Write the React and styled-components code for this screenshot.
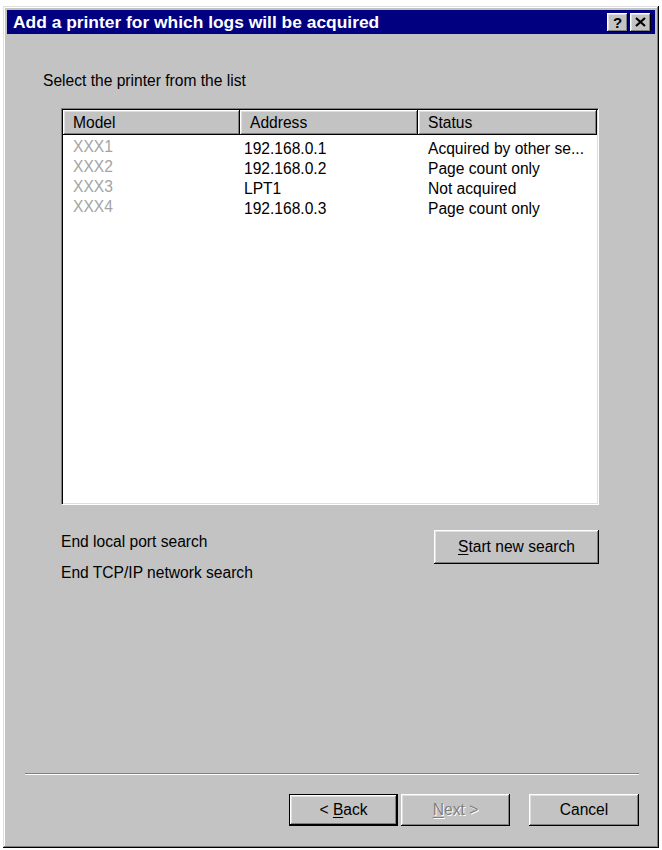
import styled, { createGlobalStyle } from "styled-components";

const GlobalStyle = createGlobalStyle`
  html, body {
    margin: 0;
    padding: 0;
    background: #fff;
  }
  body {
    font-family: "Liberation Sans", Arial, sans-serif;
    font-size: 15.6px;
    color: #000;
  }
`;

const bevel = `
  box-shadow: inset -1px -1px #000, inset 1px 1px #fff,
    inset -2px -2px #808080, inset 2px 2px #dfdfdf;
`;

const Window = styled.div`
  box-sizing: border-box;
  width: 656px;
  height: 842px;
  margin: 6px 0 0 3px;
  padding: 4px;
  display: flex;
  flex-direction: column;
  background: #c3c3c3;
  box-shadow: inset -1px -1px #000, inset 1px 1px #dfdfdf,
    inset -2px -2px #808080, inset 2px 2px #fff;
`;

const TitleBar = styled.div`
  flex: none;
  height: 24px;
  display: flex;
  align-items: center;
  justify-content: space-between;
  padding: 0 4px 0 6px;
  background: #000080;
`;

const TitleText = styled.span`
  color: #fff;
  font-weight: bold;
  font-size: 17.4px;
  white-space: nowrap;
`;

const CaptionButtons = styled.div`
  display: flex;
  gap: 2px;
`;

const CaptionButton = styled.div`
  width: 21px;
  height: 19px;
  display: flex;
  align-items: center;
  justify-content: center;
  background: #c3c3c3;
  font-weight: bold;
  font-size: 15px;
  ${bevel}
`;

const Body = styled.div`
  flex: 1;
  display: flex;
  flex-direction: column;
  padding: 38px 56px 0 36px;
`;

const Instruction = styled.div`
  line-height: 18px;
  white-space: nowrap;
`;

const ListView = styled.div`
  box-sizing: border-box;
  flex: none;
  height: 397px;
  margin: 18px 0 0 18px;
  background: #fff;
  border: 1px solid;
  border-color: #808080 #fff #fff #808080;
  box-shadow: inset 1px 1px #000, inset -1px -1px #dfdfdf;
  padding: 1px;
  display: flex;
  flex-direction: column;
`;

const Columns = `
  display: grid;
  grid-template-columns: 177px 178px 1fr;
`;

const Header = styled.div`
  ${Columns}
  height: 25px;
`;

const HeaderCell = styled.div`
  display: flex;
  align-items: center;
  padding-left: 10px;
  background: #c3c3c3;
  ${bevel}
`;

const Rows = styled.div`
  padding-top: 4px;
`;

const Row = styled.div`
  ${Columns}
  height: 20px;
  align-items: center;
`;

const Cell = styled.div`
  padding-left: ${(p) => p.$indent || 10}px;
  line-height: 18px;
  white-space: nowrap;
  overflow: hidden;
`;

const ModelCell = styled(Cell)`
  color: #a4a4a4;
  padding-bottom: 5px;
  line-height: 15px;
`;

const SearchArea = styled.div`
  display: flex;
  justify-content: space-between;
  align-items: flex-start;
  margin: 25px 0 0 18px;
`;

const SearchLabels = styled.div`
  display: flex;
  flex-direction: column;
  gap: 13px;
  padding-top: 3px;
`;

const Label = styled.div`
  line-height: 18px;
`;

const Button = styled.button`
  box-sizing: border-box;
  width: ${(p) => p.$width}px;
  height: ${(p) => p.$height || 32}px;
  padding: 0;
  border: ${(p) => (p.$default ? "1px solid #000" : "none")};
  background: #c3c3c3;
  font-family: "Liberation Sans", Arial, sans-serif;
  font-size: 15.6px;
  color: ${(p) => (p.disabled ? "#808080" : "#000")};
  text-shadow: ${(p) => (p.disabled ? "1px 1px #fff" : "none")};
  ${bevel}

  u {
    text-underline-offset: 2px;
  }
`;

const Footer = styled.div`
  flex: none;
  padding: 0 16px 18px 18px;
`;

const Separator = styled.div`
  height: 1px;
  background: #808080;
  border-bottom: 1px solid #fff;
  margin-bottom: 19px;
`;

const ButtonRow = styled.div`
  display: flex;
  justify-content: flex-end;
  gap: 3px;
`;

const Spacer = styled.div`
  width: 13px;
`;

const printers = [
  { model: "XXX1", address: "192.168.0.1", status: "Acquired by other se..." },
  { model: "XXX2", address: "192.168.0.2", status: "Page count only" },
  { model: "XXX3", address: "LPT1", status: "Not acquired" },
  { model: "XXX4", address: "192.168.0.3", status: "Page count only" },
];

function CloseGlyph() {
  return (
    <svg width="11" height="10" viewBox="0 0 11 10">
      <path d="M1 1 L10 9 M10 1 L1 9" stroke="#000" strokeWidth="2.2" />
    </svg>
  );
}

export default function App() {
  return (
    <>
      <GlobalStyle />
      <Window>
        <TitleBar>
          <TitleText>Add a printer for which logs will be acquired</TitleText>
          <CaptionButtons>
            <CaptionButton>?</CaptionButton>
            <CaptionButton>
              <CloseGlyph />
            </CaptionButton>
          </CaptionButtons>
        </TitleBar>

        <Body>
          <Instruction>Select the printer from the list</Instruction>
          <ListView>
            <Header>
              <HeaderCell>Model</HeaderCell>
              <HeaderCell>Address</HeaderCell>
              <HeaderCell>Status</HeaderCell>
            </Header>
            <Rows>
              {printers.map((p) => (
                <Row key={p.model}>
                  <ModelCell>{p.model}</ModelCell>
                  <Cell $indent={4}>{p.address}</Cell>
                  <Cell>{p.status}</Cell>
                </Row>
              ))}
            </Rows>
          </ListView>

          <SearchArea>
            <SearchLabels>
              <Label>End local port search</Label>
              <Label>End TCP/IP network search</Label>
            </SearchLabels>
            <Button $width={165} $height={34}>
              <u>S</u>tart new search
            </Button>
          </SearchArea>
        </Body>

        <Footer>
          <Separator />
          <ButtonRow>
            <Button $width={109} $default>
              &lt; <u>B</u>ack
            </Button>
            <Button $width={109} disabled>
              <u>N</u>ext &gt;
            </Button>
            <Spacer />
            <Button $width={110}>Cancel</Button>
          </ButtonRow>
        </Footer>
      </Window>
    </>
  );
}
